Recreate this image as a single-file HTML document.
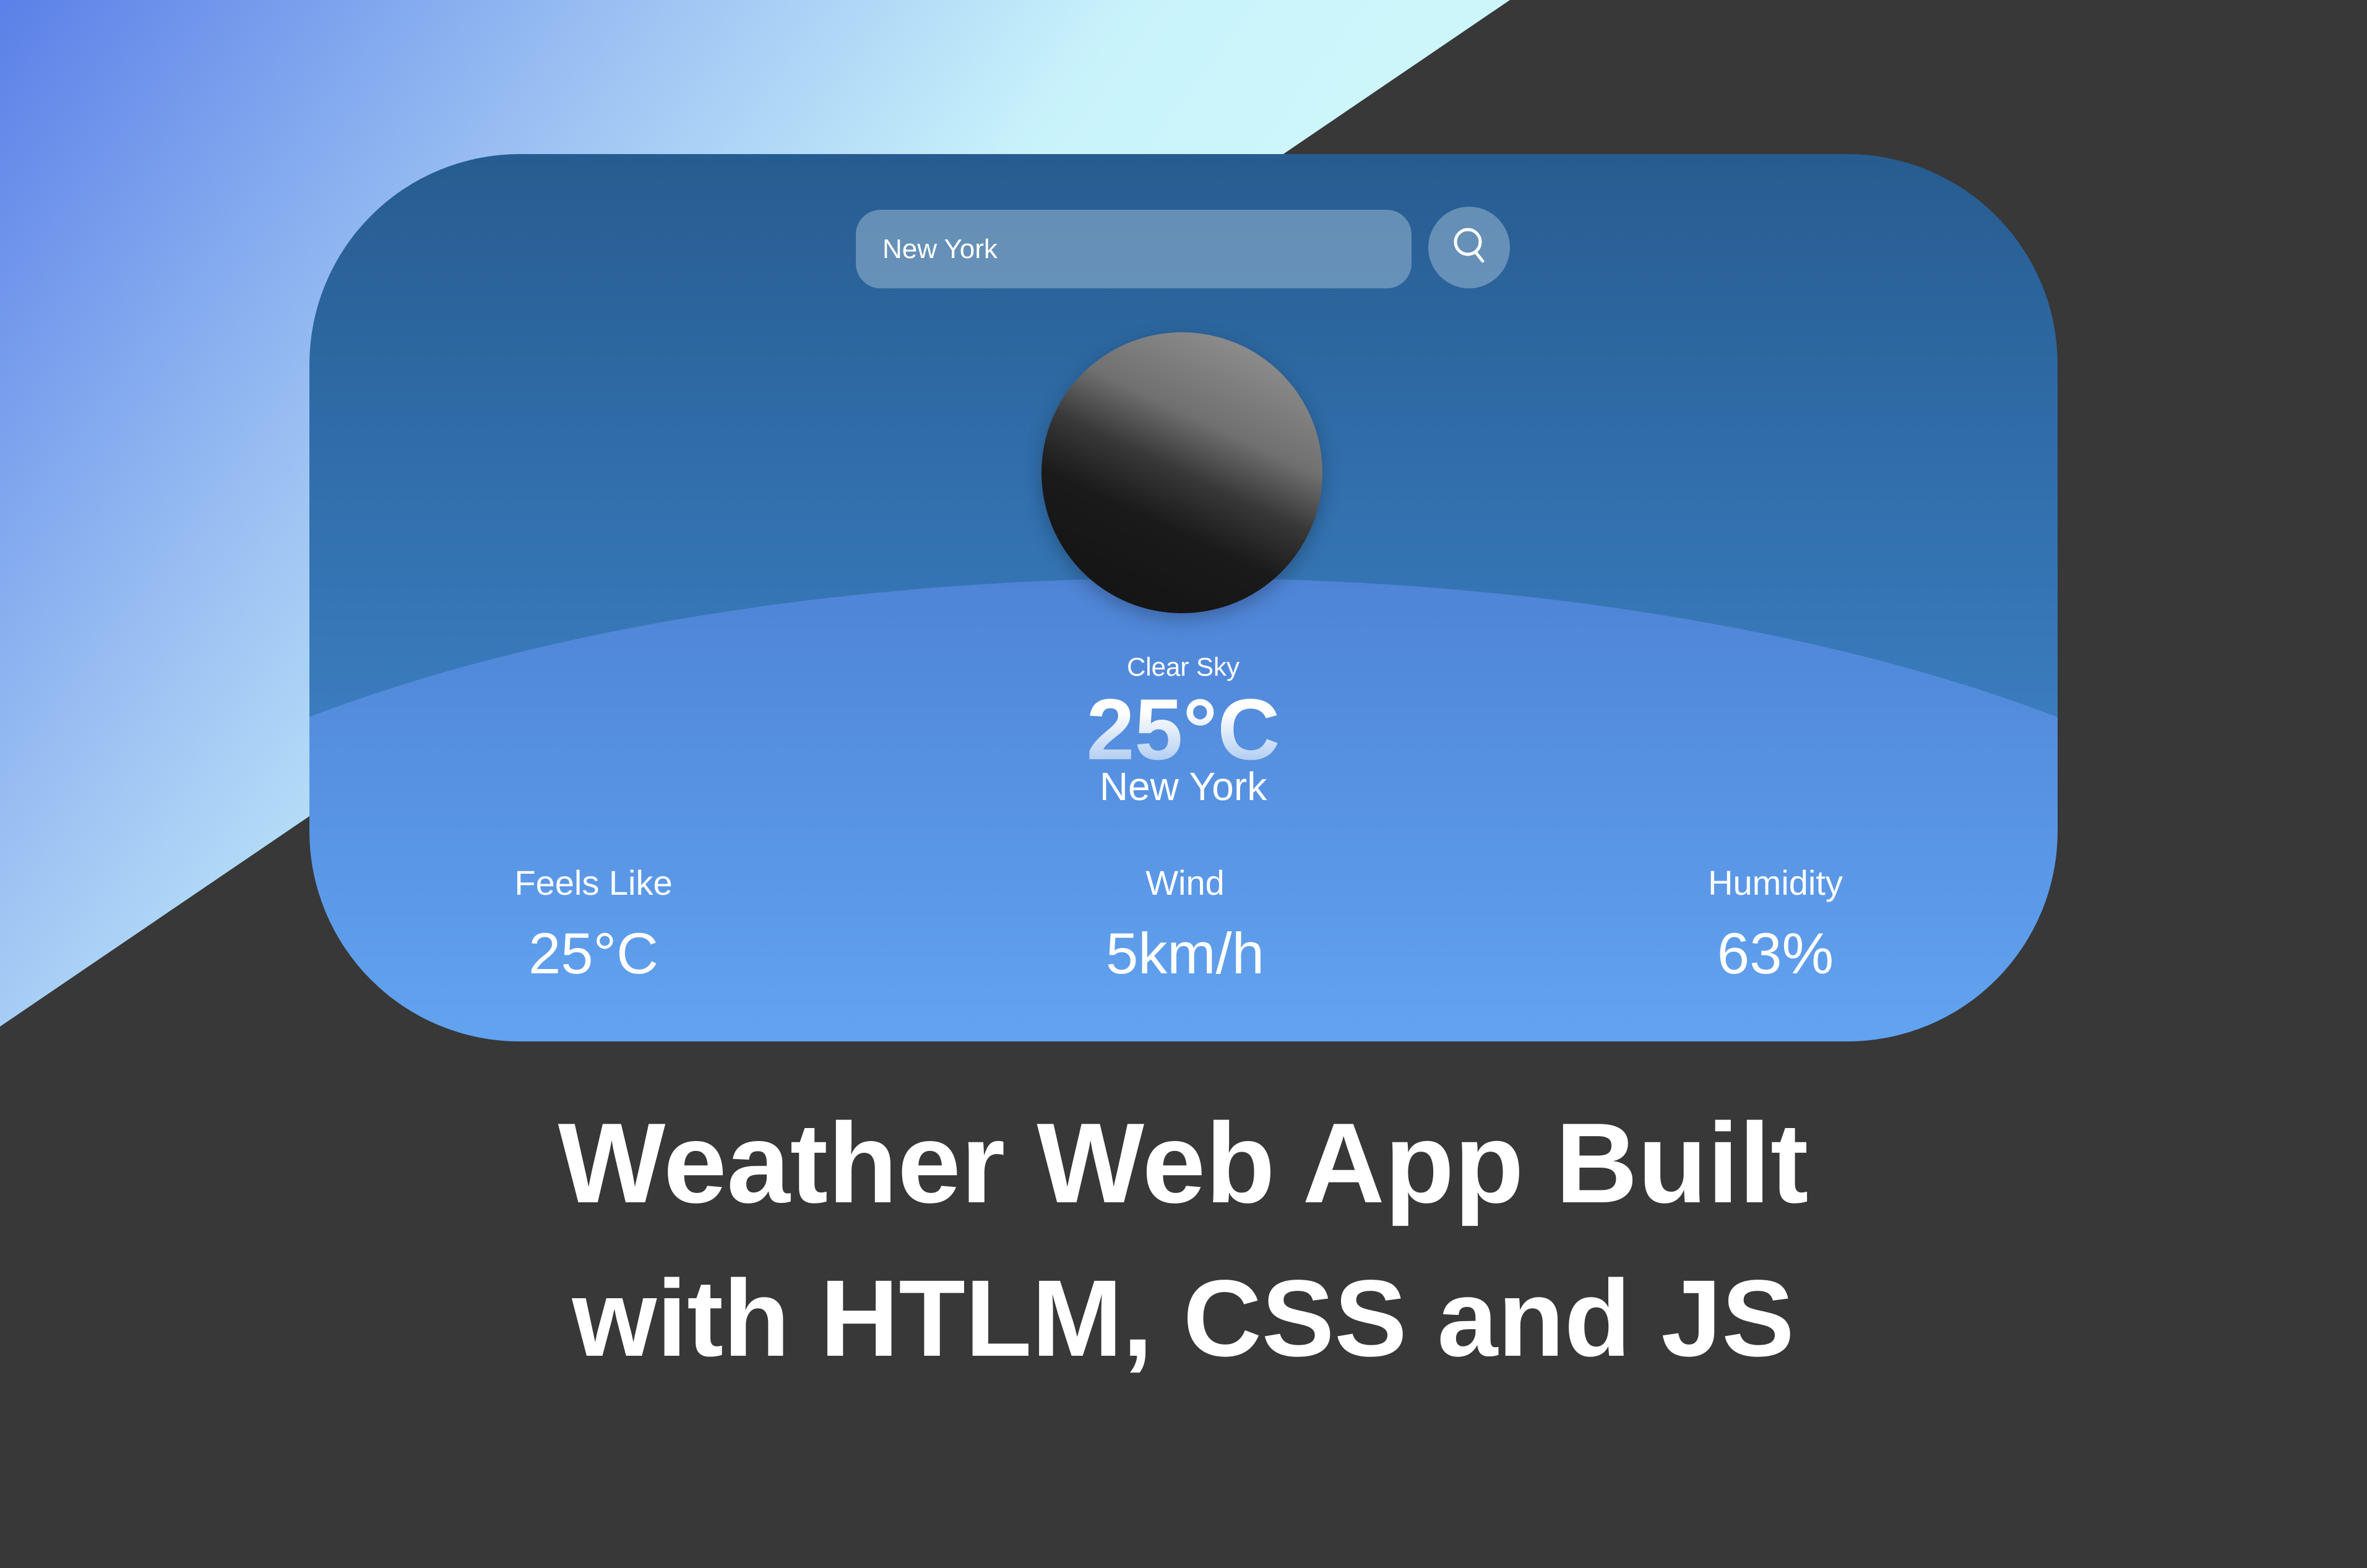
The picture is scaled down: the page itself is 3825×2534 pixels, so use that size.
<!DOCTYPE html>
<html><head><meta charset="utf-8"><style>
*{margin:0;padding:0;box-sizing:border-box}
body{width:3825px;height:2534px;background:#383838;position:relative;overflow:hidden;font-family:"Liberation Sans",sans-serif;color:#fff}
.abs{position:absolute}
.card{left:500px;top:249px;width:2825px;height:1434px;border-radius:340px;overflow:hidden;background:linear-gradient(180deg,#275c90 0%,#3270ae 40%,#3f82c6 75%,#4a8fd6 100%)}
.arc{left:-588px;top:685px;width:4000px;height:1540px;border-radius:50%;background:linear-gradient(180deg,#4f84d6 0%,#5a97e6 30%,#63a4f0 50%)}
.c{text-align:center;transform:translateX(-50%);white-space:nowrap;line-height:1}
</style></head><body>
<svg class="abs" style="left:0;top:0" width="3825" height="2534">
<defs><linearGradient id="g" x1="0" y1="0" x2="1500" y2="1100" gradientUnits="userSpaceOnUse">
<stop offset="0" stop-color="#5b80e8"/><stop offset="0.45" stop-color="#9cc2f3"/><stop offset="0.8" stop-color="#c9f3fb"/><stop offset="1" stop-color="#cdf6fb"/></linearGradient></defs>
<polygon points="0,0 2440,0 0,1659" fill="url(#g)"/>
</svg>
<div class="abs card">
<div class="abs arc"></div>
<div class="abs" style="left:883px;top:90px;width:898px;height:127px;border-radius:40px;background:rgba(200,220,235,0.38)"></div>
<div class="abs" style="left:926px;top:128px;font-size:44px;line-height:52px">New York</div>
<div class="abs" style="left:1808px;top:85px;width:132px;height:132px;border-radius:50%;background:rgba(200,220,235,0.38)"></div>
<svg class="abs" style="left:1840px;top:115px" width="70" height="70" viewBox="0 0 70 70"><circle cx="32" cy="27" r="20" fill="none" stroke="#fff" stroke-width="5"/><line x1="44" y1="43" x2="56" y2="58" stroke="#fff" stroke-width="5" stroke-linecap="round"/></svg>
<div class="abs" style="left:1183px;top:288px;width:454px;height:454px;border-radius:50%;background:linear-gradient(205deg,#9a9a9a 0%,#707070 35%,#383838 50%,#1a1a1a 65%,#121212 100%);box-shadow:0 10px 30px rgba(0,0,0,0.25)"></div>
<div class="abs c" style="left:1412px;top:808px;font-size:42px">Clear Sky</div>
<div class="abs c" style="left:1412px;top:860px;font-size:140px;font-weight:bold;background:linear-gradient(180deg,#fff 30%,#9fc1ee 100%);-webkit-background-clip:text;background-clip:text;color:transparent">25°C</div>
<div class="abs c" style="left:1412px;top:990px;font-size:64px">New York</div>
<div class="abs c" style="left:459px;top:1150px;font-size:56px">Feels Like</div>
<div class="abs c" style="left:1415px;top:1150px;font-size:56px">Wind</div>
<div class="abs c" style="left:2369px;top:1150px;font-size:56px">Humidity</div>
<div class="abs c" style="left:459px;top:1245px;font-size:94px">25°C</div>
<div class="abs c" style="left:1415px;top:1245px;font-size:94px">5km/h</div>
<div class="abs c" style="left:2369px;top:1245px;font-size:94px">63%</div>
</div>
<div class="abs c" style="left:1912px;top:1787px;font-size:184px;font-weight:bold">Weather Web App Built</div>
<div class="abs c" style="left:1912px;top:2043px;font-size:176px;font-weight:bold">with HTLM, CSS and JS</div>
</body></html>
